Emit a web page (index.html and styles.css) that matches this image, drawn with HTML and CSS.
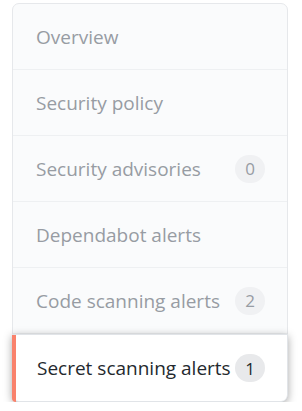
FILE: index.html
```html
<!DOCTYPE html>
<html>
<head>
<meta charset="utf-8">
<link rel="stylesheet" href="styles.css">
</head>
<body>
<nav class="menu">
  <a class="item">Overview</a>
  <a class="item">Security policy</a>
  <a class="item">Security advisories <span class="counter">0</span></a>
  <a class="item">Dependabot alerts</a>
  <a class="item">Code scanning alerts <span class="counter">2</span></a>
  <a class="item selected">Secret scanning alerts <span class="counter">1</span></a>
</nav>
</body>
</html>
```
FILE: styles.css
```css
html, body {
  margin: 0;
  padding: 0;
  background: #ffffff;
}
body {
  padding: 3px 14px 0 12px;
  font-family: "Open Sans", "Noto Sans", sans-serif;
}
.menu {
  display: flex;
  flex-direction: column;
  background: #fafbfc;
  border: 1px solid #e6e8eb;
  border-radius: 7px;
}
.item {
  display: flex;
  align-items: center;
  justify-content: space-between;
  height: 65px;
  padding: 0 22px 0 23px;
  font-size: 19px;
  color: #979ca3;
  border-bottom: 1px solid #eef0f2;
}
.counter {
  display: inline-flex;
  align-items: center;
  justify-content: center;
  width: 30px;
  height: 28px;
  border-radius: 14px;
  background: #f0f1f3;
  color: #979ca3;
  font-size: 17px;
}
.selected {
  position: relative;
  margin: 0 -1px -1px -1px;
  padding-left: 24px;
  height: 66px;
  border: 1px solid #e1e4e8;
  border-radius: 0 0 7px 7px;
  background: #ffffff;
  color: #24292e;
  box-shadow: 0 2px 9px rgba(0, 0, 0, 0.35);
}
.selected::before {
  content: "";
  position: absolute;
  left: -1px;
  top: 0;
  bottom: -1px;
  width: 4px;
  background: #f9826c;
  border-bottom-left-radius: 7px;
}
.selected .counter {
  background: #e8e9eb;
  color: #24292e;
}
```
